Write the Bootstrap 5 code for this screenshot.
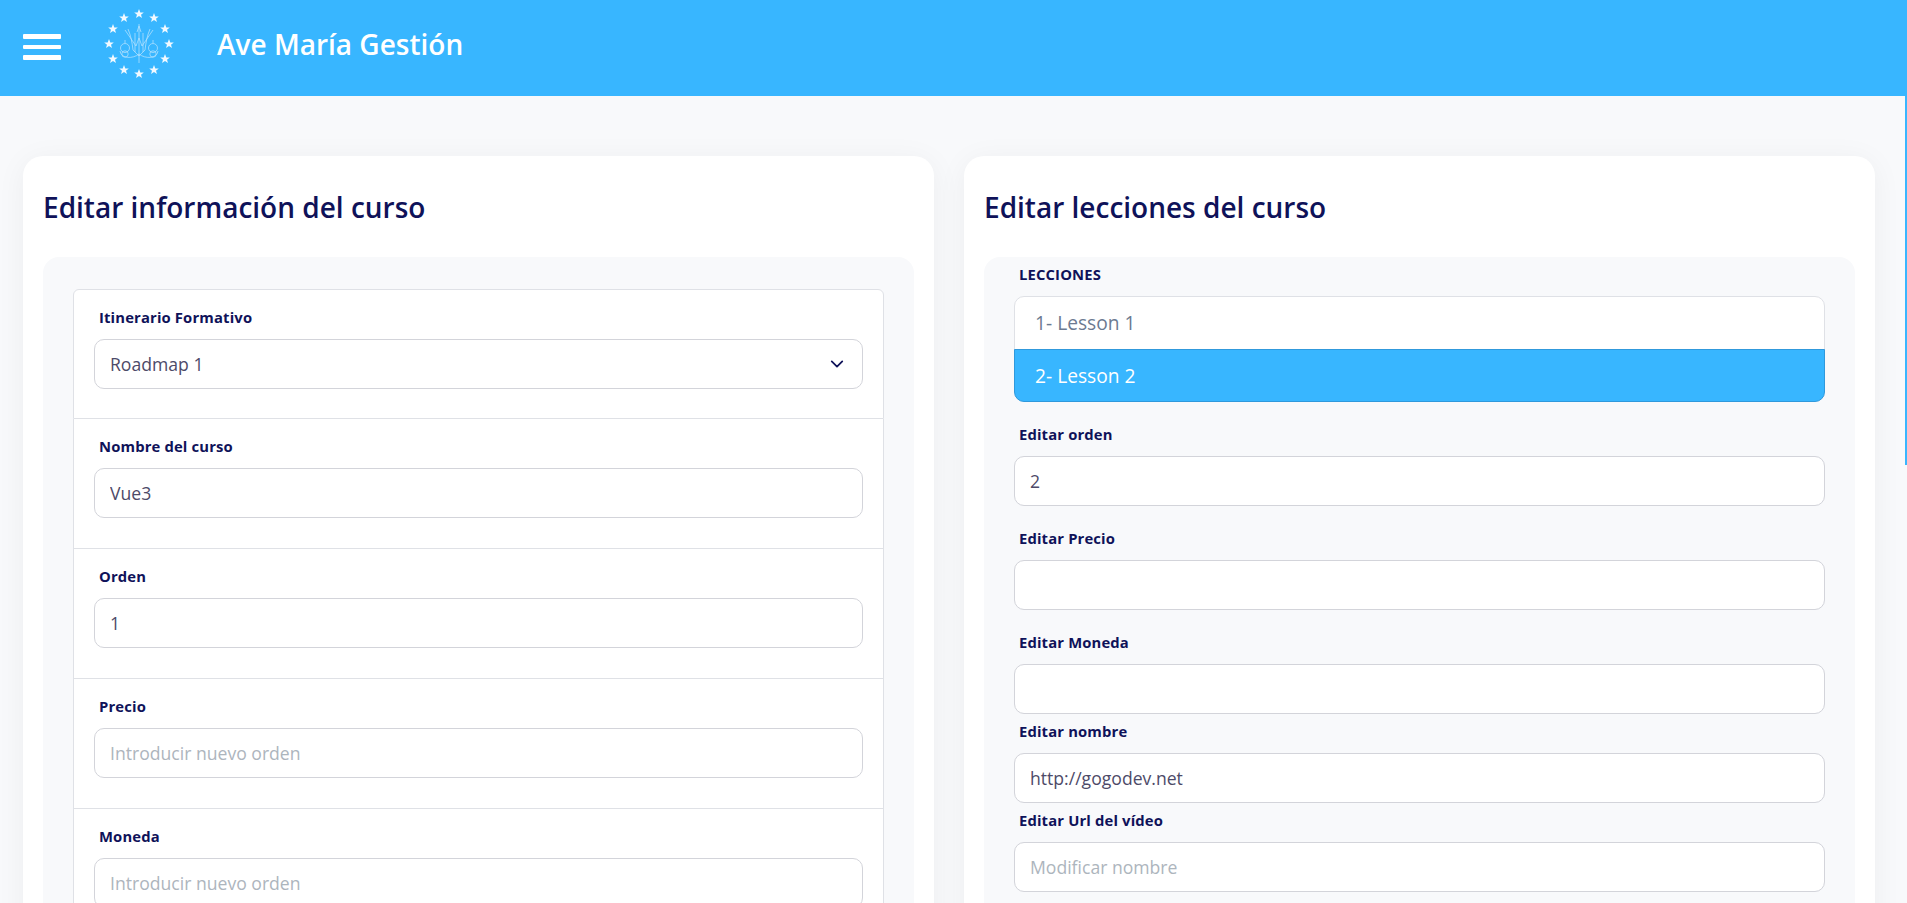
<!DOCTYPE html>
<html lang="es">
  <head>
    <meta charset="UTF-8" />
    <meta name="viewport" content="width=device-width, initial-scale=1.0" />
    <title>Ave María Gestión</title>
    <link href="https://cdn.jsdelivr.net/npm/bootstrap@5.3.0/dist/css/bootstrap.min.css" rel="stylesheet" />
    <style>
      body {
        font-family: "Open Sans", sans-serif;
        background-color: #f8f9fb;
        color: #0f1259;
      }
      .scroll-thumb {
        position: fixed;
        top: 0;
        right: 0;
        width: 2px;
        height: 465px;
        background-color: #38b6ff;
      }
      .top-bar {
        height: 96px;
        background-color: #38b6ff;
        padding-left: 23px;
      }
      .menu-lines {
        width: 38px;
        gap: 6px;
        margin-bottom: 2px;
      }
      .menu-lines span {
        height: 4.6px;
        background-color: #fff;
        border-radius: 1px;
      }
      .brand-logo {
        margin-left: 43px;
        margin-bottom: 8px;
      }
      .brand-name {
        margin-left: 43px;
        margin-bottom: 8px;
        font-size: 28px;
        font-weight: 600;
        color: #fff;
      }
      .page-body { padding: 60px 32px 40px 23px; gap: 30px; }
      .panel-card {
        flex: 1 1 0;
        background-color: #fff;
        border-radius: 20px;
        padding: 30px 20px 20px;
        box-shadow: 0 4px 30px rgba(0, 0, 0, 0.05);
      }
      .panel-title {
        font-size: 28px;
        font-weight: 600;
        line-height: 42px;
        margin-bottom: 29px;
        color: #0f1259;
      }
      .panel-inner {
        background-color: #f8f9fb;
        border-radius: 16px;
      }
      .left-inner { padding: 32px 30px; }
      .right-inner { padding: 7px 30px 40px; }
      .course-list .list-group-item {
        height: 130px;
        padding: 17px 20px 0;
        border-color: #dfe1e6;
      }
      .field-label {
        display: block;
        font-size: 14.8px;
        font-weight: 700;
        line-height: 21px;
        letter-spacing: 0.15px;
        color: #0f1259;
        margin-bottom: 11px;
        padding-left: 5px;
      }
      .form-control, .form-select {
        height: 50px;
        font-size: 17.6px;
        color: #4d4a68;
        padding-left: 15px;
        border-color: #d3d4da;
        border-radius: 10px;
      }
      .form-select {
        background-image: url("data:image/svg+xml,%3csvg xmlns='http://www.w3.org/2000/svg' viewBox='0 0 16 16'%3e%3cpath fill='none' stroke='%230f1259' stroke-linecap='round' stroke-linejoin='round' stroke-width='2' d='m2 5 6 6 6-6'/%3e%3c/svg%3e");
        background-size: 18px 14px;
        background-position: right 16px center;
      }
      .form-control::placeholder { color: #adb5bd; }
      .lesson-list { margin-bottom: 22px; border-radius: 10px; }
      .lesson-list .list-group-item {
        height: 53.5px;
        padding: 10px 20px;
        font-size: 19.2px;
        line-height: 32px;
        color: #6c7a91;
        border-color: #dfe1e6;
      }
      .lesson-list .list-group-item.active {
        background-color: #38b6ff;
        border-color: #3099dc;
        color: #fff;
      }
      .gap-wide { margin-bottom: 22px; }
      .gap-tight { margin-bottom: 7px; }
    </style>
  </head>
  <body>
    <div class="scroll-thumb"></div>
    <header class="top-bar d-flex align-items-center">
      <div class="menu-lines d-flex flex-column" aria-label="Menú">
        <span></span><span></span><span></span>
      </div>
      <svg class="brand-logo" width="70" height="72" viewBox="0 0 70 72" aria-label="Ave María">
        <defs>
          <polygon id="star" points="0,-5 1.3,-1.6 4.8,-1.5 2,0.7 3,4.1 0,2.1 -3,4.1 -2,0.7 -4.8,-1.5 -1.3,-1.6" fill="#f2f9ff" />
        </defs>
        <g id="stars"></g>
        <g fill="none" stroke="#bfe5fd" stroke-width="0.7">
          <path d="M35 16 V55 M21 22 L32 38 L35 30 L38 38 L49 22 M24 21 C27 28 28 34 29 42 M46 21 C43 28 42 34 41 42" />
          <path d="M31 25 V44 M39 25 V44 M33 24 L35 18 L37 24 M29 42 L35 48 L41 42" />
          <circle cx="21" cy="40" r="4.5" />
          <circle cx="49" cy="40" r="4.5" />
          <circle cx="21" cy="46" r="3.2" />
          <circle cx="49" cy="46" r="3.2" />
          <path d="M16 43 C17 51 29 51 35 46 C41 51 53 51 54 43 M21 35 V32 M49 35 V32" />
        </g>
      </svg>
      <span class="brand-name">Ave María Gestión</span>
    </header>

    <main class="page-body d-flex align-items-start">
      <section class="panel-card">
        <h2 class="panel-title">Editar información del curso</h2>
        <div class="panel-inner left-inner">
          <ul class="list-group course-list">
            <li class="list-group-item">
              <label class="field-label" for="roadmap">Itinerario Formativo</label>
              <select id="roadmap" class="form-select"><option>Roadmap 1</option></select>
            </li>
            <li class="list-group-item">
              <label class="field-label" for="courseName">Nombre del curso</label>
              <input id="courseName" class="form-control" type="text" value="Vue3" />
            </li>
            <li class="list-group-item">
              <label class="field-label" for="courseOrder">Orden</label>
              <input id="courseOrder" class="form-control" type="text" value="1" />
            </li>
            <li class="list-group-item">
              <label class="field-label" for="coursePrice">Precio</label>
              <input id="coursePrice" class="form-control" type="text" placeholder="Introducir nuevo orden" />
            </li>
            <li class="list-group-item">
              <label class="field-label" for="courseCurrency">Moneda</label>
              <input id="courseCurrency" class="form-control" type="text" placeholder="Introducir nuevo orden" />
            </li>
          </ul>
        </div>
      </section>

      <section class="panel-card">
        <h2 class="panel-title">Editar lecciones del curso</h2>
        <div class="panel-inner right-inner">
          <label class="field-label text-uppercase">Lecciones</label>
          <div class="list-group lesson-list">
            <a class="list-group-item" href="#">1- Lesson 1</a>
            <a class="list-group-item active" href="#">2- Lesson 2</a>
          </div>
          <label class="field-label" for="lessonOrder">Editar orden</label>
          <input id="lessonOrder" class="form-control gap-wide" type="text" value="2" />
          <label class="field-label" for="lessonPrice">Editar Precio</label>
          <input id="lessonPrice" class="form-control gap-wide" type="text" />
          <label class="field-label" for="lessonCurrency">Editar Moneda</label>
          <input id="lessonCurrency" class="form-control gap-tight" type="text" />
          <label class="field-label" for="lessonName">Editar nombre</label>
          <input id="lessonName" class="form-control gap-tight" type="text" value="http://gogodev.net" />
          <label class="field-label" for="lessonUrl">Editar Url del vídeo</label>
          <input id="lessonUrl" class="form-control" type="text" placeholder="Modificar nombre" />
        </div>
      </section>
    </main>

    <script src="https://cdn.jsdelivr.net/npm/bootstrap@5.3.0/dist/js/bootstrap.bundle.min.js"></script>
    <script>
      // twelve stars round the monogram
      const starGroup = document.getElementById("stars");
      for (let i = 0; i < 12; i++) {
        const angle = (i * Math.PI) / 6;
        const use = document.createElementNS("http://www.w3.org/2000/svg", "use");
        use.setAttribute("href", "#star");
        use.setAttribute("x", (35 + 30 * Math.sin(angle)).toFixed(1));
        use.setAttribute("y", (36 - 30 * Math.cos(angle)).toFixed(1));
        starGroup.appendChild(use);
      }
    </script>
  </body>
</html>
